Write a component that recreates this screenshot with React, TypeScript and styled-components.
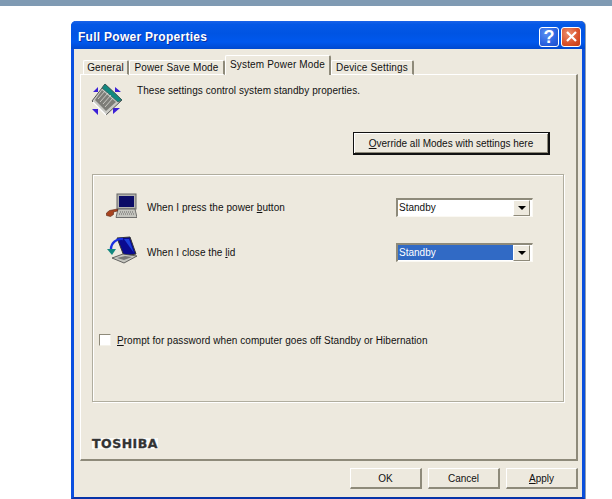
import React from "react";
import styled, { createGlobalStyle } from "styled-components";

const Global = createGlobalStyle`
  html, body { margin: 0; padding: 0; background: #fff; overflow: hidden; }
  body { width: 612px; height: 499px; font-family: "Liberation Sans", Arial, sans-serif; }
`;

const Page = styled.div`
  width: 612px;
  height: 499px;
  display: flex;
  flex-direction: column;
  overflow: hidden;
`;
const TopBar = styled.div`
  height: 6px;
  flex: none;
  background: #7f9ab3;
`;
const Stage = styled.div`
  flex: 1;
  padding: 15px 27px 0 71px;
  display: flex;
`;
const Window = styled.div`
  width: 514px;
  height: 478px;
  box-sizing: border-box;
  border-radius: 5px 5px 0 0;
  border: solid #0a4fdc;
  border-width: 0 3px 2px 3px;
  border-bottom-color: #0733a8;
  border-left-color: #0b50e0;
  box-shadow: 1px 0 0 #8f9fb0;
  display: flex;
  flex-direction: column;
  background: #ede9de;
`;
const TitleBar = styled.div`
  height: 28px;
  flex: none;
  margin: 0 -3px;
  padding: 0 3px 0 7px;
  border-radius: 5px 5px 0 0;
  background: linear-gradient(180deg, #1a63e8 0%, #0458e6 12%, #0054e3 45%, #0058ee 75%, #0049cf 100%);
  display: flex;
  align-items: center;
  justify-content: space-between;
`;
const Title = styled.div`
  color: #fff;
  font-weight: 700;
  font-size: 12px;
  letter-spacing: 0.28px;
  margin-top: 4px;
  text-shadow: 1px 1px 0 #0a2f9e;
`;
const TitleButtons = styled.div`
  display: flex;
  gap: 2px;
  margin-top: 3px;
  margin-right: 1px;
`;
const CaptionButton = styled.div<{ $close?: boolean }>`
  width: 20px;
  height: 20px;
  box-sizing: border-box;
  border: 1px solid #fff;
  border-radius: 3px;
  background: ${(p) =>
    p.$close
      ? "radial-gradient(circle at 35% 30%, #ec8f6e, #d9512a 60%, #c23a12)"
      : "radial-gradient(circle at 35% 30%, #5c90f2, #2a62e0 60%, #1c4cc8)"};
  display: flex;
  align-items: center;
  justify-content: center;
  color: #fff;
  font-weight: 700;
  font-size: 18px;
  line-height: 1;
`;
const Body = styled.div`
  flex: 1;
  display: flex;
  flex-direction: column;
  padding: 7px 4px 8px 6px;
  min-height: 0;
`;
const TabStrip = styled.div`
  height: 19px;
  flex: none;
  display: flex;
  align-items: flex-end;
  padding-left: 3px;
  position: relative;
  z-index: 1;
  margin-bottom: -1px;
`;
const Tab = styled.div<{ $active?: boolean; $w: number }>`
  width: ${(p) => p.$w}px;
  height: ${(p) => (p.$active ? 20 : 15)}px;
  box-sizing: border-box;
  flex: none;
  background: #ede9de;
  border-top: 1px solid #fff;
  border-left: 1px solid #fff;
  border-right: 2px solid #8e8a7a;
  border-bottom: ${(p) => (p.$active ? "none" : "1px solid #fff")};
  border-radius: 2px 2px 0 0;
  font-size: 10px;
  color: #111;
  display: flex;
  align-items: ${(p) => (p.$active ? "flex-start" : "center")};
  justify-content: center;
  padding-top: ${(p) => (p.$active ? 3 : 0)}px;
  white-space: nowrap;
  letter-spacing: 0.16px;
`;
const Panel = styled.div`
  flex: 1;
  border-top: 1px solid #fff;
  border-left: 1px solid #fff;
  border-right: 2px solid #8e8a7a;
  border-bottom: 2px solid #8e8a7a;
  display: flex;
  flex-direction: column;
  padding: 6px 12px 0 10px;
  min-height: 0;
`;
const Intro = styled.div`
  display: flex;
  align-items: flex-start;
  gap: 14px;
  height: 49px;
  padding-top: 2px;
  flex: none;
`;
const Text = styled.span`
  font-size: 10px;
  color: #111;
  white-space: nowrap;
  letter-spacing: 0.06px;
`;
const IntroText = styled(Text)`
  margin-top: 2px;
`;
const U = styled.span`
  text-decoration: underline;
`;
const ActionRow = styled.div`
  display: flex;
  justify-content: flex-end;
  padding-right: 14px;
  flex: none;
`;
const Btn = styled.div<{ $w: number; $h: number; $strong?: boolean }>`
  width: ${(p) => p.$w}px;
  height: ${(p) => p.$h}px;
  box-sizing: border-box;
  flex: none;
  background: #ede9de;
  border-top: 1px solid ${(p) => (p.$strong ? "#111" : "#fff")};
  border-left: 1px solid ${(p) => (p.$strong ? "#111" : "#fff")};
  border-right: 2px solid ${(p) => (p.$strong ? "#111" : "#8e8a7a")};
  border-bottom: 2px solid ${(p) => (p.$strong ? "#111" : "#8e8a7a")};
  box-shadow: ${(p) =>
    p.$strong ? "inset 1px 1px 0 #fff, inset -1px -1px 0 #8e8a7a" : "none"};
  font-size: 10px;
  color: #111;
  display: flex;
  align-items: center;
  justify-content: center;
  white-space: nowrap;
`;
const Group = styled.div`
  margin: 19px 0 0 1px;
  height: 228px;
  width: 472px;
  box-sizing: border-box;
  flex: none;
  border: 1px solid #b0ad9e;
  box-shadow: 1px 1px 0 #fff, inset 1px 1px 0 #fff;
  display: flex;
  flex-direction: column;
  padding: 14px 30px 0 13px;
`;
const SettingRow = styled.div`
  display: flex;
  align-items: center;
  height: 36px;
  margin-bottom: 9px;
  flex: none;
`;
const RowIcon = styled.div<{ $lift?: boolean }>`
  width: 31px;
  height: 31px;
  flex: none;
  margin-right: 10px;
  margin-bottom: ${(p) => (p.$lift ? 6 : 0)}px;
  display: flex;
`;
const RowLabel = styled(Text)`
  flex: 1;
`;
const Combo = styled.div`
  width: 137px;
  height: 19px;
  box-sizing: border-box;
  flex: none;
  border-top: 2px solid #8e8a7a;
  border-left: 2px solid #8e8a7a;
  border-right: 1px solid #fbf9f3;
  border-bottom: 1px solid #fbf9f3;
  background: #fff;
  display: flex;
  padding-right: 2px;
`;
const ComboValue = styled.div<{ $sel?: boolean }>`
  flex: 1;
  font-size: 10px;
  display: flex;
  align-items: center;
  padding-left: 1px;
  margin: ${(p) => (p.$sel ? "0 0 1px 0" : 0)};
  background: ${(p) => (p.$sel ? "#316ac5" : "#fff")};
  color: ${(p) => (p.$sel ? "#fff" : "#111")};
`;
const ComboArrow = styled.div`
  width: 17px;
  box-sizing: border-box;
  background: #ede9de;
  border-top: 1px solid #fff;
  border-left: 1px solid #fff;
  border-right: 1px solid #8e8a7a;
  border-bottom: 1px solid #8e8a7a;
  display: flex;
  align-items: center;
  justify-content: center;
  &::after {
    content: "";
    border-style: solid;
    border-width: 4px 4px 0 4px;
    border-color: #000 transparent transparent;
  }
`;
const CheckRow = styled.div`
  display: flex;
  align-items: center;
  gap: 6px;
  margin-top: 55px;
  margin-left: -7px;
`;
const CheckBox = styled.div`
  width: 12px;
  height: 12px;
  box-sizing: border-box;
  flex: none;
  background: #fff;
  border-top: 1px solid #8e8a7a;
  border-left: 1px solid #8e8a7a;
  border-right: 1px solid #f4f2ea;
  border-bottom: 1px solid #f4f2ea;
`;
const Logo = styled.div`
  margin: 36px 0 0 1px;
  align-self: flex-start;
  background: #fbfaf6;
  color: #333;
  font-family: "DejaVu Sans", sans-serif;
  font-weight: 700;
  font-size: 12.5px;
  line-height: 11px;
  letter-spacing: 0.5px;
  -webkit-text-stroke: 0.3px #333;
`;
const Footer = styled.div`
  display: flex;
  justify-content: flex-end;
  gap: 6px;
  padding-top: 7px;
  flex: none;
`;

const LaptopDiamond = () => (
  <svg width="32" height="33" viewBox="0 0 32 33">
    <path d="M7 4v5H2z M24 4v5h6z M1 26h6v6z M22 25h7l-7 6z" fill="#3b1fd6" />
    <path d="M14 1l17 16-16 15L1 18l10-13z" fill="#c9c9c4" stroke="#555" strokeWidth="1" />
    <path d="M14 1l17 16-4 2L11 5z" fill="#12887f" stroke="#3c5a58" strokeWidth="0.8" />
    <path d="M11 7L4 17l11 11 10-9z" fill="#7d7d78" />
    <path d="M7 16l7-8M9 19l8-9M12 21l8-9M14 24l8-9" stroke="#dddcd6" strokeWidth="0.8" />
    <path d="M2 19l13 13" stroke="#fff" strokeWidth="1.2" />
  </svg>
);
const PressIcon = () => (
  <svg width="31" height="31" viewBox="0 0 31 31">
    <rect x="11" y="2" width="19" height="15" fill="#b3b3ae" stroke="#666" />
    <rect x="13" y="4" width="15" height="11" fill="#0c0c66" />
    <path d="M12 17h17l2 8.5H10z" fill="#c5c5be" stroke="#555" strokeWidth="0.8" />
    <path d="M14 20h14M13 22h16" stroke="#666" strokeDasharray="1 1" />
    <path d="M0.5 21l3-2.5 8-1.5v2l-4 1v2.5l-3 2-4-1z" fill="#a8431f" stroke="#5a2410" strokeWidth="0.6" />
  </svg>
);
const LidIcon = () => (
  <svg width="31" height="31" viewBox="0 0 31 31">
    <path d="M11 4l13-1 6 17-12 2z" fill="#0a0a90" stroke="#333" />
    <path d="M18 5l5 0 5 14z" fill="#1c3fd8" />
    <path d="M6 24l11-4 14 2-13 7z" fill="#c5c5be" stroke="#444" strokeWidth="0.8" />
    <path d="M11 24l8-2 7 1-8 3z" fill="#777" />
    <path d="M5 15c0-6 6-11 12-10" fill="none" stroke="#1a30e0" strokeWidth="2.4" />
    <path d="M1 15l9 0-4 6z" fill="#12887f" />
  </svg>
);
const QuestionMark = () => <span>?</span>;
const CloseX = () => (
  <svg width="13" height="13" viewBox="0 0 13 13">
    <path d="M2 2l9 9M11 2l-9 9" stroke="#fff" strokeWidth="2.2" />
  </svg>
);

export default function App() {
  return (
    <Page>
      <Global />
      <TopBar />
      <Stage>
        <Window>
          <TitleBar>
            <Title>Full Power Properties</Title>
            <TitleButtons>
              <CaptionButton><QuestionMark /></CaptionButton>
              <CaptionButton $close><CloseX /></CaptionButton>
            </TitleButtons>
          </TitleBar>
          <Body>
            <TabStrip>
              <Tab $w={46}>General</Tab>
              <Tab $w={96}>Power Save Mode</Tab>
              <Tab $w={106} $active>System Power Mode</Tab>
              <Tab $w={83}>Device Settings</Tab>
            </TabStrip>
            <Panel>
              <Intro>
                <LaptopDiamond />
                <IntroText>These settings control system standby properties.</IntroText>
              </Intro>
              <ActionRow>
                <Btn $w={197} $h={23} $strong><span><U>O</U>verride all Modes with settings here</span></Btn>
              </ActionRow>
              <Group>
                <SettingRow>
                  <RowIcon><PressIcon /></RowIcon>
                  <RowLabel>When I press the power <U>b</U>utton</RowLabel>
                  <Combo>
                    <ComboValue>Standby</ComboValue>
                    <ComboArrow />
                  </Combo>
                </SettingRow>
                <SettingRow>
                  <RowIcon $lift><LidIcon /></RowIcon>
                  <RowLabel>When I close the <U>l</U>id</RowLabel>
                  <Combo>
                    <ComboValue $sel>Standby</ComboValue>
                    <ComboArrow />
                  </Combo>
                </SettingRow>
                <CheckRow>
                  <CheckBox />
                  <Text><U>P</U>rompt for password when computer goes off Standby or Hibernation</Text>
                </CheckRow>
              </Group>
              <Logo>TOSHIBA</Logo>
            </Panel>
            <Footer>
              <Btn $w={72} $h={21}>OK</Btn>
              <Btn $w={72} $h={21}>Cancel</Btn>
              <Btn $w={72} $h={21}><span><U>A</U>pply</span></Btn>
            </Footer>
          </Body>
        </Window>
      </Stage>
    </Page>
  );
}
